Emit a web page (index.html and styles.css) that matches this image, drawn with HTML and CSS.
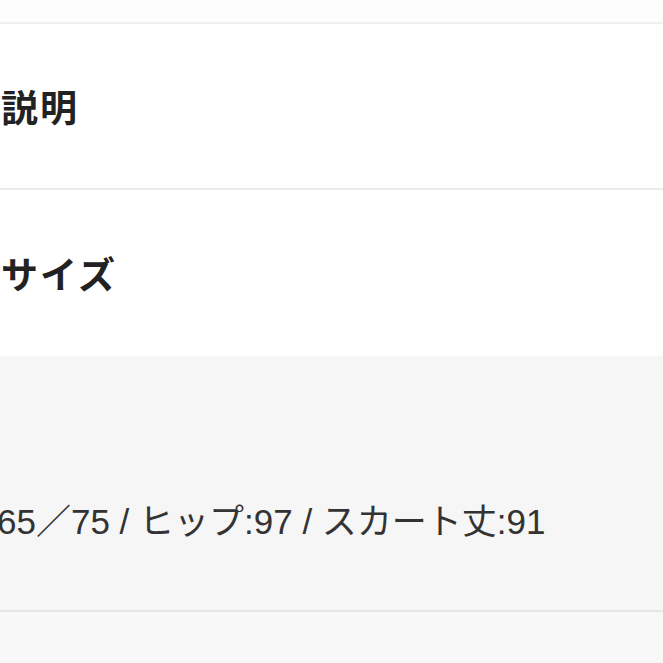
FILE: index.html
```html
<!DOCTYPE html>
<html lang="ja">
<head>
<meta charset="utf-8">
<link rel="stylesheet" href="styles.css">
</head>
<body>
<div class="page">
  <div class="topbar"></div>
  <section class="section">
    <h2 class="heading">説明</h2>
  </section>
  <section class="section section-size">
    <h2 class="heading">サイズ</h2>
  </section>
  <div class="detail">
    <p class="detail-text">65／75 / ヒップ:97 / スカート丈:91</p>
  </div>
  <div class="footer"></div>
</div>
</body>
</html>
```

FILE: styles.css
```css
html, body {
  margin: 0;
  padding: 0;
  background: #ffffff;
}
.page {
  width: 663px;
  height: 663px;
  overflow: hidden;
  display: flex;
  flex-direction: column;
  font-family: "Liberation Sans", "Noto Sans CJK JP", sans-serif;
}
.topbar {
  height: 22px;
  flex: none;
  background: #fdfdfd;
  border-bottom: 2px solid #efefef;
}
.section {
  height: 164px;
  flex: none;
  display: flex;
  align-items: center;
  border-bottom: 2px solid #ececec;
  padding-left: 1px;
}
.section-size {
  height: 166px;
  border-bottom: none;
}
.heading {
  margin: 0;
  font-family: "Noto Sans CJK JP", sans-serif;
  font-size: 37px;
  font-weight: 700;
  letter-spacing: 2px;
  color: #222222;
  line-height: 1;
}
.detail {
  height: 256px;
  flex: none;
  background: #f6f6f6;
  border-bottom: 2px solid #e6e6e6;
  display: flex;
  align-items: center;
  padding-top: 76px;
  box-sizing: border-box;
}
.detail-text {
  margin: 0 0 0 -3px;
  font-size: 35px;
  color: #333333;
  white-space: nowrap;
  line-height: 1;
}
.footer {
  flex: 1;
  background: #f8f8f8;
}
```
